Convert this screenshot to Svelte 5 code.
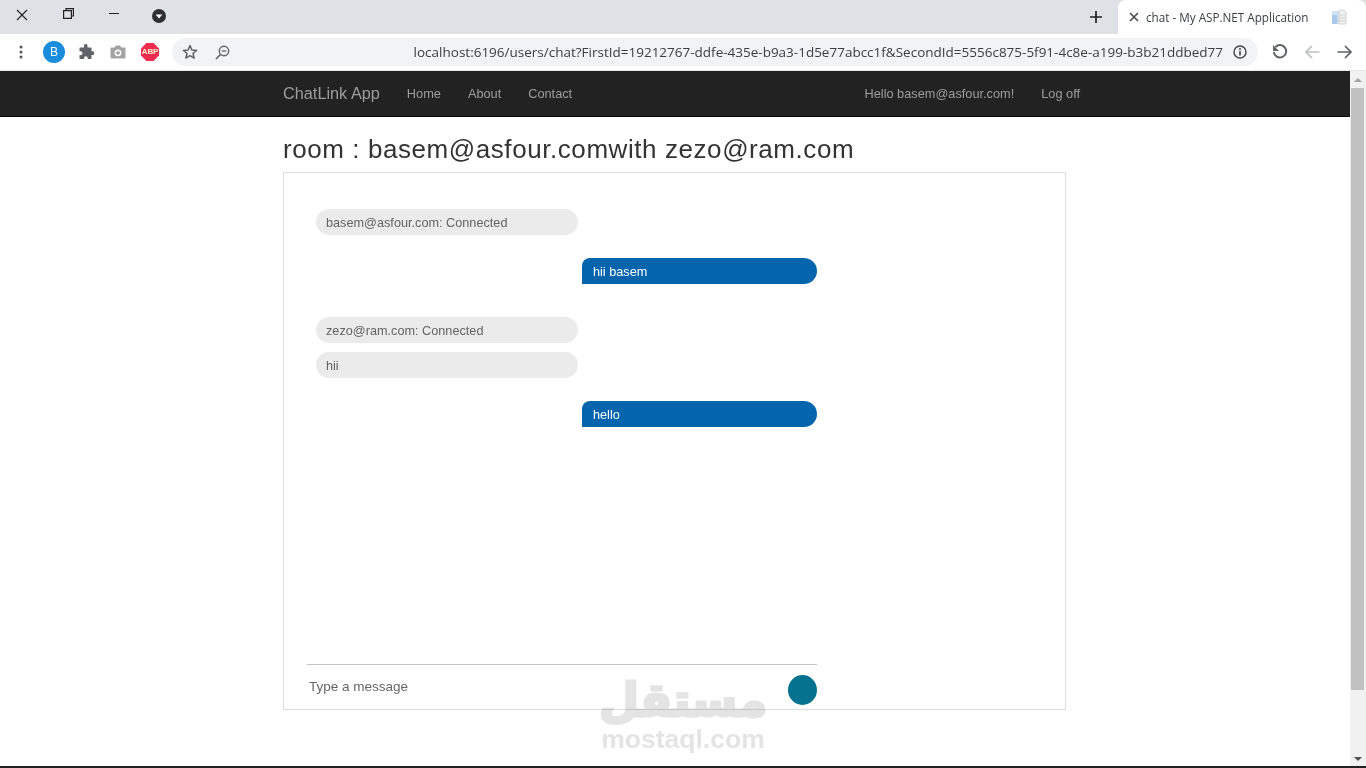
<script>
	let messages = [
		{ text: "basem@asfour.com: Connected", mine: false, top: 36 },
		{ text: "hii basem", mine: true, top: 23 },
		{ text: "zezo@ram.com: Connected", mine: false, top: 33 },
		{ text: "hii", mine: false, top: 9 },
		{ text: "hello", mine: true, top: 23 }
	];
	let url = "localhost:6196/users/chat?FirstId=19212767-ddfe-435e-b9a3-1d5e77abcc1f&SecondId=5556c875-5f91-4c8e-a199-b3b21ddbed77";
</script>

<div class="browser">
	<div class="tabstrip">
		<svg class="winbtn close" viewBox="0 0 12 12" width="12" height="12"><path d="M1 1l10 10M11 1L1 11" stroke="#222" stroke-width="1.1" fill="none" /></svg>
		<svg class="winbtn restore" viewBox="0 0 11 11" width="11" height="11"><path d="M3 2.500V.6h7.400V8H8.400M.6 2.600h7.800v7.800H.6z" stroke="#222" stroke-width="1.2" fill="none" /></svg>
		<span class="minimize"></span>
		<svg class="tabsearch" viewBox="0 0 14 14" width="14" height="14"><circle cx="7" cy="7" r="7" fill="#2e3033" /><path d="M3.700 5.500h6.600L7 9.600z" fill="#fff" /></svg>
		<svg class="newtab" viewBox="0 0 12 12" width="12" height="12"><path d="M6 0v12M0 6h12" stroke="#222" stroke-width="1.7" /></svg>
		<div class="tab">
			<svg viewBox="0 0 10 10" width="10" height="10"><path d="M1 1l8 8M9 1L1 9" stroke="#444" stroke-width="1.5" /></svg>
			<span class="tabtitle">chat - My ASP.NET Application</span>
			<svg class="favicon" viewBox="0 0 16 16" width="16" height="16">
				<path d="M1 2h7v13H1z" fill="#cfe0f3" />
				<path d="M1 6h5v9H1z" fill="#a9c9ec" />
				<path d="M8 1h5l2 2v12H8z" fill="#f1f1f1" stroke="#c9c9c9" stroke-width=".8" />
				<path d="M9 6h5M9 9h5M9 12h5" stroke="#c9c9c9" stroke-width=".8" />
			</svg>
		</div>
	</div>
	<div class="toolbar">
		<svg class="dots" viewBox="0 0 4 14" width="4" height="14"><circle cx="2" cy="2" r="1.500" fill="#555" /><circle cx="2" cy="7" r="1.500" fill="#555" /><circle cx="2" cy="12" r="1.500" fill="#555" /></svg>
		<span class="avatar">B</span>
		<svg class="puzzle" viewBox="0 0 16 16" width="16" height="16"><path d="M6 1.500a1.800 1.800 0 0 1 3.500 0V3.500h3.200a.8.8 0 0 1 .8.8v2.900h1a1.900 1.900 0 0 1 0 3.800h-1v3.200a.8.8 0 0 1-.8.8h-3v-1a1.800 1.800 0 0 0-3.600 0v1H2.300a.8.8 0 0 1-.8-.8v-2.900h1a2 2 0 0 0 0-4h-1V4.300a.8.8 0 0 1 .8-.8H6z" fill="#5f6368" /></svg>
		<svg class="camera" viewBox="0 0 16 14" width="16" height="14"><path d="M1.500 2.500h3.200L6 .6h4l1.300 1.900h3.200a1 1 0 0 1 1 1v9a1 1 0 0 1-1 1h-13a1 1 0 0 1-1-1v-9a1 1 0 0 1 1-1z" fill="#a3a3a3" /><circle cx="8" cy="7.800" r="3.400" fill="#fff" /><circle cx="8" cy="7.800" r="1.900" fill="#a3a3a3" /></svg>
		<span class="abp">ABP</span>
		<div class="omnibox">
			<svg class="star" viewBox="0 0 16 16" width="16" height="16"><path d="M8 1.600l1.900 4.400 4.700.4-3.600 3.100 1.100 4.700L8 11.700l-4.100 2.500L5 9.500 1.400 6.400l4.700-.4z" fill="none" stroke="#5f6368" stroke-width="1.500" stroke-linejoin="round" /></svg>
			<svg class="zoomout" viewBox="0 0 15 15" width="15" height="15"><circle cx="9" cy="6" r="4.700" fill="none" stroke="#5f6368" stroke-width="1.400" /><path d="M5.500 9.500L1 14" stroke="#5f6368" stroke-width="1.600" /><path d="M6.700 6h4.600" stroke="#5f6368" stroke-width="1.300" /></svg>
			<span class="url">{url}</span>
			<svg class="info" viewBox="0 0 14 14" width="14" height="14"><circle cx="7" cy="7" r="6" fill="none" stroke="#444" stroke-width="1.400" /><path d="M7 6v4.500" stroke="#444" stroke-width="1.600" /><circle cx="7" cy="4" r="1" fill="#444" /></svg>
		</div>
		<svg class="reload" viewBox="0 0 16 16" width="16" height="16"><path d="M3.400 3.100A6.200 6.200 0 1 1 1.800 8" fill="none" stroke="#5f6368" stroke-width="2" /><path d="M1 1v6h6z" fill="#5f6368" /></svg>
		<svg class="back" viewBox="0 0 16 14" width="16" height="14"><path d="M15.500 7H2M8 1L2 7l6 6" fill="none" stroke="#bcbec1" stroke-width="1.700" /></svg>
		<svg class="forward" viewBox="0 0 16 14" width="16" height="14"><path d="M.5 7H14M8 1l6 6-6 6" fill="none" stroke="#5f6368" stroke-width="1.700" /></svg>
	</div>
</div>

<div class="viewport">
	<div class="page">
		<nav class="navbar">
			<div class="navinner">
				<a class="brand" href="#/">ChatLink App</a>
				<a class="navlink" href="#/">Home</a>
				<a class="navlink" href="#/">About</a>
				<a class="navlink" href="#/">Contact</a>
				<span class="spacer"></span>
				<a class="navlink" href="#/">Hello basem@asfour.com!</a>
				<a class="navlink" href="#/">Log off</a>
			</div>
		</nav>
		<main class="content">
			<h2>room : basem@asfour.comwith zezo@ram.com</h2>
			<div class="chatbox">
				<div class="column">
					<div class="history">
						{#each messages as m}
							<div class="msg" class:mine={m.mine} style="margin-top: {m.top}px">{m.text}</div>
						{/each}
					</div>
					<div class="inputrow">
						<span class="placeholder">Type a message</span>
						<button class="send" aria-label="Send"></button>
					</div>
				</div>
			</div>
		</main>
		<div class="watermark">
			<span class="wm-ar">مستقل</span>
			<span class="wm-en">mostaql.com</span>
		</div>
	</div>
	<div class="scrollbar">
		<span class="arrow up"></span>
		<span class="thumb"></span>
		<span class="arrow down"></span>
	</div>
</div>
<div class="taskbar"></div>

<style>
	:global(body) {
		margin: 0;
		overflow: hidden;
		font-family: "Liberation Sans", Arial, sans-serif;
	}

	.browser {
		height: 71px;
		background: #fff;
	}

	.tabstrip {
		height: 34px;
		background: #dee1e6;
		display: flex;
		align-items: center;
		position: relative;
	}

	.winbtn.close {
		margin-left: 16px;
		margin-top: -5px;
	}

	.winbtn.restore {
		margin-left: 35px;
		margin-top: -7px;
	}

	.minimize {
		width: 10px;
		height: 1px;
		background: #222;
		margin-left: 35px;
		margin-top: -7px;
	}

	.tabsearch {
		margin-left: 33px;
		margin-top: -3px;
	}

	.newtab {
		margin-left: auto;
		margin-right: 16px;
		margin-top: -1px;
	}

	.tab {
		width: 248px;
		height: 34px;
		background: #fff;
		border-radius: 8px 8px 0 0;
		display: flex;
		align-items: center;
		box-sizing: border-box;
		padding-left: 11px;
	}

	.tabtitle {
		font-family: "Open Sans", sans-serif;
		font-size: 11.700px;
		color: #3c4043;
		margin-left: 7px;
		white-space: nowrap;
	}

	.favicon {
		margin-left: 23px;
	}

	.toolbar {
		height: 36px;
		border-bottom: 1px solid #e8e8e8;
		box-sizing: content-box;
		display: flex;
		align-items: center;
	}

	.dots {
		margin-left: 19px;
	}

	.avatar {
		width: 22px;
		height: 22px;
		border-radius: 50%;
		background: #1a8cdb;
		color: #fff;
		font-size: 12px;
		line-height: 22px;
		text-align: center;
		margin-left: 20px;
	}

	.puzzle {
		margin-left: 13px;
	}

	.camera {
		margin-left: 16px;
	}

	.abp {
		width: 18px;
		height: 18px;
		clip-path: polygon(30% 0, 70% 0, 100% 30%, 100% 70%, 70% 100%, 30% 100%, 0 70%, 0 30%);
		background: #ee2c50;
		color: #fbeecb;
		font-size: 8px;
		font-weight: bold;
		line-height: 18px;
		text-align: center;
		margin-left: 15px;
		letter-spacing: -0.2px;
	}

	.omnibox {
		width: 1086px;
		height: 28px;
		margin-left: 13px;
		border-radius: 14px;
		background: #f1f3f4;
		display: flex;
		align-items: center;
	}

	.star {
		margin-left: 10px;
	}

	.zoomout {
		margin-left: 17px;
	}

	.url {
		font-family: "Open Sans", sans-serif;
		font-size: 13.510px;
		color: #3c4043;
		white-space: nowrap;
		margin-left: auto;
	}

	.info {
		margin-left: 10px;
		margin-right: 11px;
	}

	.reload {
		margin-left: 14px;
	}

	.back {
		margin-left: 16px;
	}

	.forward {
		margin-left: 17px;
	}

	.viewport {
		height: 695px;
		display: flex;
	}

	.page {
		flex: 1;
		position: relative;
		background: #fff;
	}

	.navbar {
		height: 45px;
		background: #222;
		border-bottom: 1px solid #080808;
	}

	.navinner {
		width: 797px;
		margin-left: 283px;
		height: 45px;
		display: flex;
		align-items: center;
		gap: 27px;
	}

	.brand {
		font-size: 16.300px;
		color: #9d9d9d;
		text-decoration: none;
	}

	.navlink {
		font-size: 12.750px;
		color: #9d9d9d;
		text-decoration: none;
	}

	.spacer {
		flex: 1;
	}

	.content {
		width: 783px;
		margin-left: 283px;
	}

	h2 {
		font-size: 26px;
		letter-spacing: 0.57px;
		font-weight: 500;
		line-height: 31px;
		color: #333;
		margin: 17px 0 7px;
		white-space: nowrap;
	}

	.chatbox {
		height: 536px;
		border: 1px solid #ddd;
		padding: 0 248px 0 23px;
		box-sizing: content-box;
		width: 510px;
	}

	.column {
		height: 100%;
		display: flex;
		flex-direction: column;
		width: 510px;
	}

	.history {
		flex: 1;
		padding: 0 0 0 9px;
	}

	.msg {
		width: 262px;
		height: 26px;
		line-height: 26px;
		box-sizing: border-box;
		padding: 1px 0 0 10px;
		border-radius: 13px;
		background: #ebebeb;
		color: #646464;
		font-size: 12.700px;
	}

	.msg.mine {
		width: 235px;
		margin-left: 266px;
		padding-left: 11px;
		background: #0465ac;
		color: #fff;
		border-radius: 8px 13px 13px 0;
	}

	.inputrow {
		height: 44px;
		border-top: 1px solid #c4c4c4;
		position: relative;
		display: flex;
		align-items: flex-start;
		justify-content: space-between;
	}

	.placeholder {
		font-size: 13.500px;
		color: #666;
		margin: 14px 0 0 2px;
	}

	.send {
		width: 29px;
		height: 30px;
		border: 0;
		border-radius: 50%;
		background: #05728f;
		margin-top: 10px;
		padding: 0;
	}

	.watermark {
		position: absolute;
		left: 600px;
		top: 606px;
		width: 166px;
		display: flex;
		flex-direction: column;
		align-items: center;
		color: #e4e4e4;
		font-weight: bold;
		pointer-events: none;
		mix-blend-mode: multiply;
	}

	.wm-ar {
		font-family: "DejaVu Sans", sans-serif;
		font-size: 46px;
		line-height: 46px;
		-webkit-text-stroke: 3px #e4e4e4;
	}

	.wm-en {
		font-size: 26.500px;
		line-height: 27px;
		margin-top: 3px;
	}

	.scrollbar {
		width: 16px;
		background: #f1f1f1;
		position: relative;
		display: flex;
		flex-direction: column;
		align-items: center;
	}

	.thumb {
		width: 13px;
		height: 602px;
		background: #c1c1c1;
		margin-top: 6px;
		align-self: flex-start;
		margin-left: 1px;
	}

	.arrow {
		width: 0;
		height: 0;
		border-left: 4px solid transparent;
		border-right: 4px solid transparent;
	}

	.arrow.up {
		border-bottom: 4px solid #a3a3a3;
		margin-top: 7px;
	}

	.arrow.down {
		border-top: 4px solid #505050;
		margin-top: auto;
		margin-bottom: 5px;
	}

	.taskbar {
		height: 2px;
		background: #222;
	}
</style>
